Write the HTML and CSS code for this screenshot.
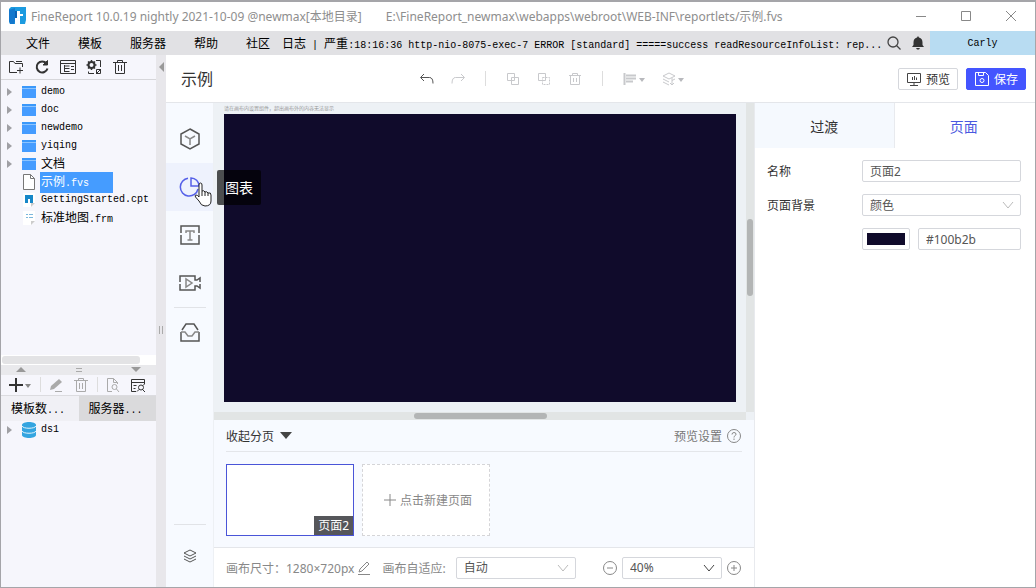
FILE: index.html
```html
<!DOCTYPE html>
<html lang="zh-CN">
<head>
    <meta charset="UTF-8">
    <meta name="viewport" content="width=device-width, initial-scale=1">
    <title>FineReport</title>
    <link rel="stylesheet" href="styles.css">
</head>
<body>
    <div class="window">
        <header class="titlebar">
            <svg class="logo" width="17" height="17" viewBox="0 0 17 17">
                <path d="M2 0h15v13l-1 4h-5v-6h3V7h-3V4H6v13H1L0 14V2z" fill="#1c9be0"/>
                <path d="M0 3l6-2v13l-1 3H1l-1-3z" fill="#1478cd"/>
                <path d="M11 7h3v4h-3z" fill="#1c9be0"/>
                <path d="M6 11h4v6H6z" fill="#fff"/>
                <path d="M6 4h2v4h2v3H6z" fill="#0c62b4"/>
                <path d="M8 4h3v3h3v2h-4v2H8z" fill="#fff"/>
            </svg>
            <span class="app-name">FineReport 10.0.19 nightly 2021-10-09 @newmax[本地目录]</span>
            <span class="file-path">E:\FineReport_newmax\webapps\webroot\WEB-INF\reportlets/示例.fvs</span>
            <div class="window-controls">
                <button aria-label="最小化"><svg width="12" height="12" viewBox="0 0 12 12"><path d="M1 6.500h10"/></svg></button>
                <button aria-label="最大化"><svg width="12" height="12" viewBox="0 0 12 12"><path d="M1.500 1.500h9v9h-9z"/></svg></button>
                <button aria-label="关闭"><svg width="12" height="12" viewBox="0 0 12 12"><path d="M1 1l10 10M11 1L1 11"/></svg></button>
            </div>
        </header>

        <nav class="menubar">
            <button>文件</button>
            <button>模板</button>
            <button>服务器</button>
            <button>帮助</button>
            <button>社区</button>
            <div class="log"><span>日志</span> | <span>严重</span>:18:16:36 http-nio-8075-exec-7 ERROR [standard] =====success readResourceInfoList: rep...</div>
            <button class="menu-icon" aria-label="搜索"><svg width="16" height="16" viewBox="0 0 16 16" fill="none" stroke="#444" stroke-width="1.300"><circle cx="7" cy="7" r="5"/><path d="M10.500 10.500l4 4"/></svg></button>
            <button class="menu-icon" aria-label="通知"><svg width="12" height="14" viewBox="0 0 12 14" fill="#333"><path d="M6 0l1 1.500c2.500.5 3.500 2.500 3.500 5V9L12 11H0l1.500-2V6.500c0-2.500 1-4.500 3.500-5zM4 12h4l-1 1.500H5z"/></svg></button>
            <button class="user">Carly</button>
        </nav>

        <div class="body">
            <aside class="sidebar">
                <div class="side-tools">
                    <button aria-label="新建文件夹"><svg width="16" height="16" viewBox="0 0 16 16"><path d="M9 13.500H1.500v-11h4l1.500 2h7.500V8M12 8.500v6M9 11.500h6M8 2.500h6"/></svg></button>
                    <button aria-label="刷新"><svg width="16" height="16" viewBox="0 0 16 16"><path d="M12.500 4.500A5.500 5.500 0 1 0 13.500 9.500" stroke-width="2"/><path d="M13.500 1.500v4.500H9z" fill="#333"/></svg></button>
                    <button aria-label="目录"><svg width="16" height="16" viewBox="0 0 16 16"><path d="M.500 1.500h15v13H.500zM.500 4.500h15M4.500 6v7M4.500 7h5M4.500 9.500h5M4.500 12.500h5M11 7.500h3M11 10.500h3"/></svg></button>
                    <button aria-label="设置"><svg width="16" height="16" viewBox="0 0 16 16"><circle cx="5.500" cy="6" r="3" stroke-width="2"/><path d="M5.500 1v2M5.500 9v2M.500 6h2M8.500 6h2M2 2.500l1.500 1.500M7.500 8L9 9.500M9 2.500L7.500 4M3.500 8L2 9.500" stroke-width="1.500"/><path d="M10 1.500h4.500V8M2.500 12.500v2H8M10.500 10.500h4v4h-4zM10 15l5-5"/></svg></button>
                    <button aria-label="删除"><svg width="16" height="16" viewBox="0 0 16 16"><path d="M1 3.500h14M5.500 3.500v-2h5v2M3.500 3.500v11h9v-11M6.500 6v6M9.500 6v6"/></svg></button>
                </div>
                <ul class="tree files">
                    <li><i class="arrow"></i><i class="folder"></i><span>demo</span></li>
                    <li><i class="arrow"></i><i class="folder"></i><span>doc</span></li>
                    <li><i class="arrow"></i><i class="folder"></i><span>newdemo</span></li>
                    <li><i class="arrow"></i><i class="folder"></i><span>yiqing</span></li>
                    <li><i class="arrow"></i><i class="folder"></i><span><b>文档</b></span></li>
                    <li class="leaf selected"><svg width="14" height="16" viewBox="0 0 14 16"><path d="M1.500.500h7l4 4v11h-11z" fill="#fff" stroke="#777"/><path d="M8.500.500v4h4" fill="none" stroke="#777"/></svg><span><b>示例</b>.fvs</span></li>
                    <li class="leaf"><svg width="14" height="16" viewBox="0 0 14 16"><path d="M1 1h12v10l-4 4H1z" fill="#fff"/><path d="M3 3h8v8H8V7H6v4H3z" fill="#1687c8"/><path d="M9 15v-4h4z" fill="#ccc"/></svg><span>GettingStarted.cpt</span></li>
                    <li class="leaf"><svg width="14" height="16" viewBox="0 0 14 16"><path d="M1 1h12v10l-4 4H1z" fill="#fff"/><path d="M4 4.500h2M7 4.500h4M4 7.500h2M7 7.500h4" stroke="#7bb7dc"/><path d="M9 15v-4h4z" fill="#ccc"/></svg><span><b>标准地图</b>.frm</span></li>
                </ul>
                <div class="tree-scroll"><i></i></div>
                <div class="splitter"><i class="up"></i><i class="grip"></i><i class="down"></i></div>
                <div class="data-tools">
                    <button aria-label="新增"><svg width="24" height="16" viewBox="0 0 24 16"><path d="M1 8h14M8 1v14" stroke-width="2"/><path d="M17 7h6l-3 4z" fill="#888" stroke="none"/></svg></button>
                    <i class="sep"></i>
                    <button disabled aria-label="编辑"><svg width="16" height="16" viewBox="0 0 16 16"><path d="M2 13l1-4 8-7 3 3-8 7z" fill="#aaa" stroke="none"/><path d="M7 14.500h7"/></svg></button>
                    <button disabled aria-label="删除"><svg width="16" height="16" viewBox="0 0 16 16"><path d="M1 3.500h14M5.500 3.500v-2h5v2M3.500 3.500v11h9v-11M6.500 6v6M9.500 6v6"/></svg></button>
                    <i class="sep"></i>
                    <button disabled aria-label="预览"><svg width="16" height="16" viewBox="0 0 16 16"><path d="M7 14.500H2.500v-13h6l4 4V7M8.500 1.500v4h4"/><circle cx="9.500" cy="10" r="2.500"/><path d="M11.500 12l2.500 3"/></svg></button>
                    <button aria-label="连接"><svg width="16" height="16" viewBox="0 0 16 16"><path d="M6 14.500H1.500v-12h13V7M1.500 5.500h13M3.500 8.500h3M3.500 11.500h2M7 14.500l2-2M13 8.500l1.500-1.500M12 12l3 3"/><circle cx="11" cy="10.500" r="2.500"/></svg></button>
                </div>
                <div class="data-tabs">
                    <button class="active"><span><b>模板数</b>...</span></button>
                    <button><span><b>服务器</b>...</span></button>
                </div>
                <ul class="tree datasets">
                    <li><i class="arrow"></i><svg width="14" height="16" viewBox="0 0 14 16"><path d="M0 3c0-4 14-4 14 0v10c0 4-14 4-14 0z" fill="#34a5e0"/><path d="M0 4c1 3 13 3 14 0M0 9c1 3 13 3 14 0" fill="none" stroke="#e4f4fc"/></svg><span>ds1</span></li>
                </ul>
            </aside>
            <div class="side-divider"><i class="collapse"></i><i class="handle"></i></div>

            <main class="designer">
                <div class="toolbar">
                    <h1>示例</h1>
                    <div class="tools">
                        <button class="on" aria-label="撤销"><svg width="16" height="16" viewBox="0 0 16 16"><path d="M5 3L1.500 6.500 5 10M2 6.500h8.500q3.500 0 3.500 6"/></svg></button>
                        <button aria-label="重做"><svg width="16" height="16" viewBox="0 0 16 16"><path d="M11 3l3.500 3.500L11 10M14 6.500H5.500Q2 6.500 2 12.500"/></svg></button>
                        <i class="sep"></i>
                        <button aria-label="复制"><svg width="16" height="16" viewBox="0 0 16 16"><path d="M2.500 2.500h7v7h-7zM6.500 6.500h7v7h-7z"/></svg></button>
                        <button aria-label="剪切"><svg width="16" height="16" viewBox="0 0 16 16"><path d="M2.500 2.500h7v7h-7z"/><path d="M6.500 6.500h7v7h-7z" stroke-dasharray="2 1"/></svg></button>
                        <button aria-label="删除"><svg width="16" height="16" viewBox="0 0 16 16"><path d="M2 4.500h12M5.500 4.500v-2h5v2M3.500 4.500v9h9v-9M6.500 7v4M9.500 7v4"/></svg></button>
                        <i class="sep"></i>
                        <button aria-label="对齐"><svg width="24" height="16" viewBox="0 0 24 16"><path d="M2.500 2v12M4 4.500h10M4 7.500h10M4 10.500h7" stroke-width="2"/><path d="M17 7h6l-3 4z" class="caret"/></svg></button>
                        <button aria-label="层级"><svg width="24" height="16" viewBox="0 0 24 16"><path d="M2 5l6-3 6 3-6 3zM2 8l6 3M2 11l6 3M11 7v7M9 12l2 2 2-2M14 8l-3 1.500"/><path d="M17 7h6l-3 4z" class="caret"/></svg></button>
                    </div>
                    <button class="btn"><svg width="16" height="16" viewBox="0 0 16 16"><path d="M1.500 2.500h13v9h-13zM8 12v2M4 14.500h8M6.500 6v3M8.500 5v4M10.500 6.500v2.500"/></svg>预览</button>
                    <button class="btn primary"><svg width="16" height="16" viewBox="0 0 16 16"><path d="M1.500 1.500h10l3 3v10h-13zM4.500 1.500v3h5v-3"/><circle cx="8" cy="9.500" r="2"/></svg>保存</button>
                </div>

                <div class="workspace">
                    <nav class="rail">
                        <button aria-label="组件"><svg width="24" height="24" viewBox="0 0 24 24"><path d="M12 2l9 5v10l-9 5-9-5V7z"/><path d="M7 9l5 3 5-3M12 12v6" class="thin"/></svg></button>
                        <button class="active" aria-label="图表">
                            <svg width="24" height="24" viewBox="0 0 24 24"><path d="M10 3.200A9 9 0 0 0 10 21a9 9 0 0 0 10-7"/><path d="M13 3v8h8a8 8 0 0 0-8-8z" class="thin"/></svg>
                            <span class="tooltip">图表</span>
                            <svg class="pointer" width="20" height="26" viewBox="0 0 20 26"><path d="M5 15V3q0-2 1.500-2T8 3v6q2-1 3 1 2-1 3 1 3-1 3 2v6q0 5-6 5-4 0-6-5l-3.500-4q-1-2 .5-2t3 2z" fill="#fff" stroke="#222"/><path d="M8 9v5M11 10v4M14 11v3" stroke="#222"/></svg>
                        </button>
                        <button aria-label="文本"><svg width="24" height="24" viewBox="0 0 24 24"><path d="M3 10V3h18v7M3 12v9h18v-9"/><path d="M8 10V8h8v2M12 8v9M9.500 17h5" class="thin"/></svg></button>
                        <button aria-label="媒体"><svg width="24" height="24" viewBox="0 0 24 24"><path d="M2 11V5h15v4h2l3-2v4M2 13v6h15v-4h2l3 2v-4"/><path d="M8 8v8l6-4z" class="thin"/></svg></button>
                        <hr>
                        <button aria-label="素材"><svg width="24" height="24" viewBox="0 0 24 24"><path d="M4 10l4-6h8l4 6M3 12v9h18v-9"/><path d="M3 12h4l3 4h4l3-4h4" class="thin"/></svg></button>
                        <hr class="bottom">
                        <button class="layers" aria-label="图层"><svg width="14" height="14" viewBox="0 0 14 14"><path d="M1 4l6-3 6 3-6 3zM1 7l6 3 6-3M1 10l6 3 6-3"/></svg></button>
                    </nav>

                    <section class="center">
                        <div class="stage">
                            <div class="stage-view">
                                <p class="hint">请在画布内设置组件，超出画布外的内容无法显示</p>
                                <div class="canvas"></div>
                            </div>
                            <div class="vscroll"><i></i></div>
                            <div class="hscroll"><i></i></div>
                        </div>
                        <div class="pages">
                            <div class="pages-head">
                                <button>收起分页<i class="tri"></i></button>
                                <button class="preview-set">预览设置<svg width="16" height="16" viewBox="0 0 16 16"><circle cx="8" cy="8" r="6.500"/><path d="M6 6.500q0-2 2-2t2 1.700q0 1-1 1.500T8 9.500M8 10.500v1.500"/></svg></button>
                            </div>
                            <div class="page-list">
                                <div class="page current"><span>页面2</span></div>
                                <button class="page new"><svg width="14" height="14" viewBox="0 0 14 14"><path d="M1 7h12M7 1v12"/></svg>点击新建页面</button>
                            </div>
                        </div>
                        <footer class="status">
                            <span class="size">画布尺寸：1280×720px</span>
                            <button aria-label="修改尺寸"><svg width="14" height="14" viewBox="0 0 14 14"><path d="M2 11l1-3 7-7 2 2-7 7zM1 13.500h12"/></svg></button>
                            <label for="fit">画布自适应:</label>
                            <div class="select fit">
                                <select id="fit"><option>自动</option></select>
                                <svg width="12" height="8" viewBox="0 0 12 8"><path d="M1 1l5 6 5-6"/></svg>
                            </div>
                            <button class="zoom-out" aria-label="缩小"><svg width="16" height="16" viewBox="0 0 16 16"><circle cx="8" cy="8" r="6.500"/><path d="M5 8h6"/></svg></button>
                            <div class="select zoom">
                                <select aria-label="缩放"><option>40%</option></select>
                                <svg width="12" height="8" viewBox="0 0 12 8"><path d="M1 1l5 6 5-6"/></svg>
                            </div>
                            <button aria-label="放大"><svg width="16" height="16" viewBox="0 0 16 16"><circle cx="8" cy="8" r="6.500"/><path d="M5 8h6M8 5v6"/></svg></button>
                        </footer>
                    </section>

                    <aside class="props">
                        <div class="prop-tabs">
                            <button>过渡</button>
                            <button class="active">页面</button>
                        </div>
                        <form class="form">
                            <label for="pageName">名称</label>
                            <input type="text" id="pageName" value="页面2">
                            <label for="pageBg">页面背景</label>
                            <div class="select">
                                <select id="pageBg"><option>颜色</option></select>
                                <svg width="12" height="8" viewBox="0 0 12 8"><path d="M1 1l5 6 5-6"/></svg>
                            </div>
                            <div class="color-row">
                                <input type="color" value="#100b2b" aria-label="背景颜色">
                                <input type="text" value="#100b2b" aria-label="颜色值">
                            </div>
                        </form>
                    </aside>
                </div>
            </main>
        </div>
    </div>
</body>
</html>
```
FILE: styles.css
```css
* {
    box-sizing: border-box;
    margin: 0;
    padding: 0;
}
body {
    font-family: "Noto Sans", "Noto Sans CJK SC", sans-serif;
    font-size: 12px;
    color: #333;
    background-color: #fff;
}
button {
    font: inherit;
    color: inherit;
    background: none;
    border: none;
    display: flex;
    align-items: center;
    justify-content: center;
}
svg {
    flex: none;
}
ul {
    list-style: none;
}
.window {
    display: flex;
    flex-direction: column;
    height: 100vh;
    border: 1px solid #a5a5a9;
    border-top-width: 2px;
}

/* title bar */
.titlebar {
    display: flex;
    align-items: center;
    flex: none;
    height: 29px;
    padding: 0 2px 2px 8px;
    color: #8e8e8e;
    white-space: nowrap;
}
.app-name {
    margin-left: 5px;
}
.file-path {
    margin-left: 24px;
}
.window-controls {
    display: flex;
    margin-left: auto;
}
.window-controls button {
    width: 45px;
    height: 27px;
}
.window-controls svg {
    fill: none;
    stroke: #888;
}

/* menu bar */
.menubar {
    display: flex;
    align-items: center;
    flex: none;
    height: 24px;
    padding-left: 25px;
    background-color: #e1e1e4;
    color: #000;
}
.menubar button {
    margin-right: 28px;
}
.log {
    flex: 1;
    margin-left: -16px;
    padding-bottom: 2px;
    overflow: hidden;
    white-space: nowrap;
    font-family: "Liberation Mono", monospace;
    font-size: 10px;
}
.log span,
.tree b,
.data-tabs b {
    font-family: "Noto Sans CJK SC", sans-serif;
    font-size: 12px;
    font-weight: normal;
}
.menubar .menu-icon {
    width: 24px;
    margin: 0;
}
.menubar .user {
    width: 105px;
    height: 24px;
    margin: 0;
    background-color: #b8dcf2;
    font-family: "Liberation Mono", monospace;
    font-size: 10px;
}

.body {
    display: flex;
    flex: 1;
    min-height: 0;
}

/* left sidebar */
.sidebar {
    display: flex;
    flex-direction: column;
    flex: none;
    width: 155px;
    background-color: #f6f6fc;
}
.side-tools {
    display: flex;
    align-items: center;
    gap: 10px;
    flex: none;
    height: 25px;
    padding-left: 7px;
    border-bottom: 1px solid #d6d6da;
}
.side-tools svg,
.data-tools svg {
    fill: none;
    stroke: #333;
}
.tree {
    font-family: "Liberation Mono", monospace;
    font-size: 10px;
    color: #000;
    overflow: hidden;
}
.files {
    flex: 274 0 0;
    padding-top: 3px;
}
.datasets {
    flex: 168 0 0;
}
.tree li {
    display: flex;
    align-items: center;
    height: 18px;
    padding-left: 6px;
}
.tree .leaf {
    padding-left: 21px;
}
.tree span {
    margin-left: 4px;
    padding-left: 1px;
    line-height: 18px;
}
.tree .selected span {
    padding-right: 24px;
    background-color: #459cff;
    color: #fff;
}
.arrow {
    width: 15px;
    height: 8px;
}
.arrow::before {
    content: "";
    display: block;
    width: 0;
    border: 4px solid transparent;
    border-left: 5px solid #a0a0a4;
    border-right: 0;
}
.folder {
    width: 14px;
    height: 12px;
    background: linear-gradient(#3a98fa 2px, #8cc4ff 2px, #8cc4ff 3px, #459cff 3px);
}
.tree-scroll {
    flex: none;
    height: 10px;
    padding: 1px;
    background-color: #fff;
}
.tree-scroll i {
    display: block;
    width: 90%;
    height: 8px;
    border-radius: 3px;
    background-color: #e3e3e5;
}
.splitter {
    display: flex;
    align-items: center;
    justify-content: space-between;
    flex: none;
    height: 10px;
    padding: 0 15px;
    background-color: #e9e9ec;
}
.up,
.down {
    border: 5px solid transparent;
    border-top-width: 0;
    border-bottom-color: #999;
}
.down {
    border-top: 5px solid #999;
    border-bottom-width: 0;
}
.grip {
    width: 6px;
    height: 4px;
    border: solid #aaa;
    border-width: 1px 0;
}
.data-tools {
    display: flex;
    align-items: center;
    gap: 9px;
    flex: none;
    height: 20px;
    padding-left: 7px;
}
.data-tools button:disabled svg {
    stroke: #aaa;
}
.sep {
    width: 1px;
    height: 15px;
    background-color: #ddd;
}
.data-tools .sep {
    margin: 0 -2px 0 -1px;
}
.data-tabs {
    display: flex;
    flex: none;
    height: 26px;
    border-top: 1px solid #dcdce0;
}
.data-tabs button {
    flex: 1;
    justify-content: flex-start;
    padding: 0 0 2px 10px;
    background-color: #dadadc;
    color: #000;
    font-family: "Liberation Mono", monospace;
    font-size: 10px;
}
.data-tabs .active {
    background-color: #f0f0f5;
}
.side-divider {
    display: flex;
    flex-direction: column;
    align-items: center;
    flex: none;
    width: 10px;
    padding-top: 7px;
    background-color: #e8e7eb;
}
.collapse {
    border: 5px solid transparent;
    border-left-width: 0;
    border-right-color: #999;
}
.handle {
    width: 4px;
    height: 8px;
    margin: auto;
    border: solid #aaa;
    border-width: 0 1px;
}

/* designer toolbar */
.designer {
    display: flex;
    flex-direction: column;
    flex: 1;
    min-width: 0;
}
.toolbar {
    display: flex;
    align-items: center;
    gap: 8px;
    flex: none;
    height: 48px;
    padding: 0 9px 0 15px;
    border-bottom: 1px solid #e4e6ea;
}
.toolbar h1 {
    width: 230px;
    padding-bottom: 2px;
    font-size: 16px;
    font-weight: normal;
}
.toolbar svg {
    fill: none;
    stroke: #444;
}
.tools {
    display: flex;
    align-items: center;
    gap: 15px;
    margin-right: auto;
}
.tools svg {
    stroke: #c8c9cc;
}
.tools .on svg {
    stroke: #555;
}
.tools .sep {
    margin: 0 4px;
}
.caret {
    fill: #b8b9bd;
    stroke: none;
}
.btn {
    gap: 4px;
    width: 60px;
    height: 22px;
    border: 1px solid #d5d7dc;
    border-radius: 2px;
}
.primary {
    border-color: #4455ff;
    background-color: #4455ff;
    color: #fff;
}
.toolbar .primary svg {
    stroke: #fff;
}

.workspace {
    display: flex;
    flex: 1;
    min-height: 0;
}

/* component rail */
.rail {
    display: flex;
    flex-direction: column;
    align-items: center;
    flex: none;
    width: 48px;
    padding-top: 12px;
    background-color: #f7faff;
    border-right: 1px solid #edf0f4;
}
.rail button {
    position: relative;
    flex: none;
    width: 47px;
    height: 48px;
}
.rail svg {
    fill: none;
    stroke: #555;
    stroke-width: 1.5;
}
.rail .thin {
    stroke: #888;
}
.rail .layers {
    height: 62px;
}
.rail .layers svg {
    stroke-width: 1;
}
.rail .active {
    background-color: #eef2fd;
}
.rail .active svg,
.rail .active .thin {
    stroke: #5560e8;
}
.rail hr {
    width: 32px;
    border: none;
    border-top: 1px solid #e1e3e7;
}
.rail .bottom {
    margin-top: auto;
}
.tooltip {
    position: absolute;
    left: 51px;
    top: 7px;
    z-index: 1;
    padding: 0 8px;
    border-radius: 2px;
    background-color: rgba(0, 0, 0, 0.68);
    color: #fff;
    font-size: 14px;
    line-height: 35px;
    white-space: nowrap;
}
.rail .active .pointer {
    position: absolute;
    left: 28px;
    top: 19px;
    z-index: 2;
    stroke-width: 1;
}

/* canvas */
.center {
    display: flex;
    flex-direction: column;
    flex: 1;
    min-width: 0;
}
.stage {
    display: grid;
    grid-template-columns: 1fr 8px;
    grid-template-rows: 1fr 8px;
    flex: 1;
    min-height: 0;
    background-color: #edf1f5;
}
.stage-view {
    display: flex;
    flex-direction: column;
    padding: 0 10px;
}
.hint {
    height: 11px;
    font-size: 5px;
    line-height: 11px;
    color: #999;
}
.canvas {
    flex: 1;
    margin-bottom: 10px;
    background-color: #100b2b;
}
.vscroll,
.hscroll {
    display: flex;
    padding: 1px;
    background-color: #e2e5e5;
}
.vscroll {
    flex-direction: column;
}
.vscroll i {
    height: 25%;
    margin-top: 115px;
    border-radius: 3px;
    background-color: #b3b5b5;
}
.hscroll i {
    width: 25%;
    margin-left: 199px;
    border-radius: 3px;
    background-color: #b3b5b5;
}

/* pages */
.pages {
    padding: 0 12px 11px;
    background-color: #f7faff;
}
.pages-head {
    display: flex;
    justify-content: space-between;
    height: 32px;
    border-bottom: 1px solid #e4e6ea;
}
.tri {
    margin-left: 6px;
    border: 6px solid transparent;
    border-top: 7px solid #444;
    border-bottom-width: 0;
}
.preview-set {
    gap: 4px;
    color: #777;
}
.preview-set svg,
.status svg {
    fill: none;
    stroke: #888;
}
.page-list {
    display: flex;
    gap: 8px;
    padding-top: 12px;
}
.page {
    width: 128px;
    height: 72px;
    background-color: #fff;
}
.current {
    display: flex;
    align-items: flex-end;
    justify-content: flex-end;
    border: 1px solid #4a55d8;
}
.current span {
    padding: 0 4px;
    background-color: #55565a;
    color: #fff;
    line-height: 19px;
}
.new {
    gap: 3px;
    padding-left: 3px;
    border: 1px dashed #d5d5d8;
    color: #888;
}
.new svg {
    stroke: #888;
}

/* status bar */
.status {
    display: flex;
    align-items: center;
    flex: none;
    height: 40px;
    padding: 0 12px;
    border-top: 1px solid #e4e6ea;
    color: #888;
    white-space: nowrap;
}
.size {
    margin-right: 3px;
}
.status label {
    margin: 0 10px 0 11px;
}
.select {
    position: relative;
}
.select svg {
    position: absolute;
    right: 7px;
    top: 7px;
    fill: none;
    stroke: #bbb;
    pointer-events: none;
}
.status .zoom svg {
    stroke: #444;
}
.status .fit svg {
    stroke: #bbb;
}
select,
input {
    display: block;
    width: 100%;
    height: 22px;
    padding: 0 7px;
    border: 1px solid #d5d7dc;
    border-radius: 2px;
    background-color: #fff;
    color: #555;
    font: inherit;
    appearance: none;
}
.fit {
    width: 120px;
}
.zoom {
    width: 100px;
    margin: 0 4px;
}
.zoom-out {
    margin-left: auto;
}

/* properties panel */
.props {
    flex: none;
    width: 281px;
    border-left: 1px solid #e8eaee;
}
.prop-tabs {
    display: flex;
    height: 45px;
    padding-right: 2px;
}
.prop-tabs button {
    flex: 1;
    background-color: #f5f9fe;
    font-size: 14px;
}
.prop-tabs .active {
    border-left: 1px solid #e8eaee;
    background-color: #fff;
    color: #4a58e0;
}
.form {
    display: grid;
    grid-template-columns: 95px 1fr;
    gap: 12px 0;
    align-items: center;
    padding: 12px 14px 12px 12px;
}
.color-row {
    display: flex;
    grid-column: 2;
    gap: 8px;
}
.color-row [type="color"] {
    flex: none;
    width: 48px;
    padding: 4px;
}
::-webkit-color-swatch-wrapper {
    padding: 0;
}
::-webkit-color-swatch {
    border: none;
    border-radius: 0;
}
```
